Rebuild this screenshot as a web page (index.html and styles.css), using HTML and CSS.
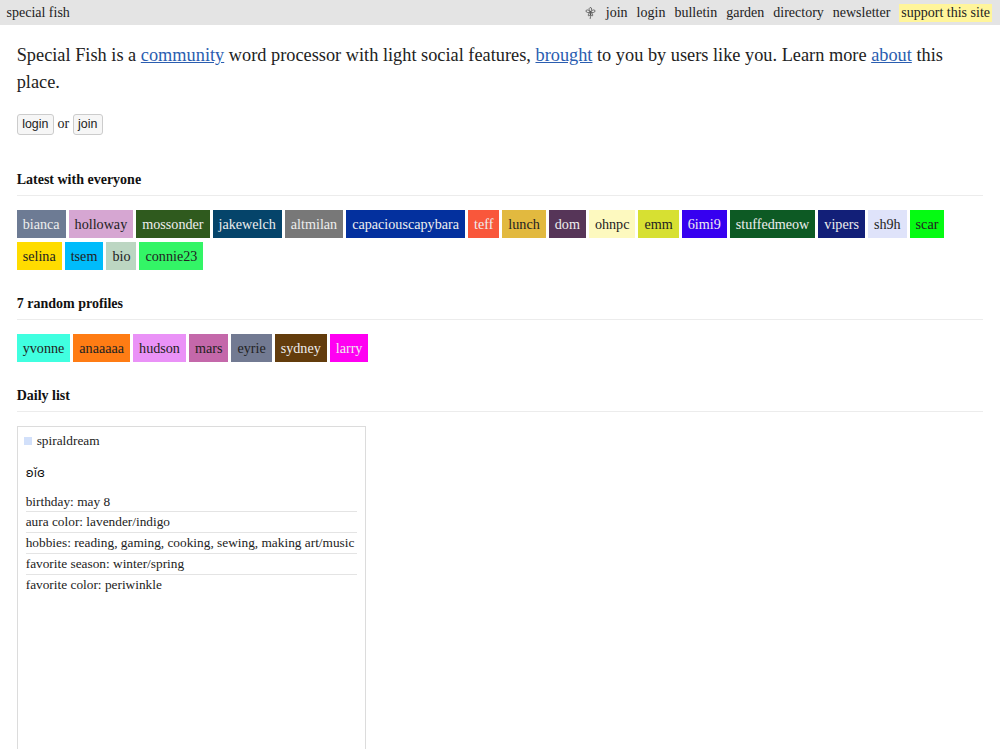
FILE: index.html
```html
<!DOCTYPE html>
<html lang="en">
<head>
<meta charset="utf-8">
<title>special fish</title>
<link rel="stylesheet" href="styles.css">
</head>
<body>
<header class="topbar">
  <a class="brand">special fish</a>
  <nav class="nav">
    <svg class="flower" viewBox="0 0 12 14" width="11" height="14" aria-hidden="true">
      <g fill="none" stroke="#444" stroke-width="0.8">
        <path d="M6 5.500C4.500 4.500 3.800 1.800 5.500 1 7.800 .8 7.800 4 6 5.500Z"/>
        <path d="M5.800 6C4 6.800 1.200 6.800 1 4.800 1.300 2.800 4.400 3.500 5.800 6Z"/>
        <path d="M6.200 6C8 6.800 10.800 6.800 11 4.800 10.700 2.800 7.600 3.500 6.200 6Z"/>
        <path d="M5.800 6.200C4.200 6.800 2.800 9.600 4 10.200 5.800 10.200 6.200 8 5.800 6.200Z"/>
        <path d="M6.200 6.200C7.800 6.800 9.200 9.600 8 10.200 6.600 10.200 5.800 8 6.200 6.200Z"/>
        <path d="M6 8C6.200 10 6.200 11.500 5.600 13.500"/>
      </g>
    </svg>
    <a class="nav-link">join</a>
    <a class="nav-link">login</a>
    <a class="nav-link">bulletin</a>
    <a class="nav-link">garden</a>
    <a class="nav-link">directory</a>
    <a class="nav-link">newsletter</a>
    <a class="nav-link support">support this site</a>
  </nav>
</header>
<main class="main">
  <p class="intro">Special Fish is a <a class="link">community</a> word processor with light social features, <a class="link">brought</a> to you by users like you. Learn more <a class="link">about</a> this place.</p>
  <p class="auth"><button class="btn">login</button> or <button class="btn">join</button></p>

  <h2 class="heading first">Latest with everyone</h2>
  <div class="tags">
    <a class="tag" style="background:#6d7b94;color:#eee">bianca</a>
    <a class="tag" style="background:#d6a6d2;color:#222">holloway</a>
    <a class="tag" style="background:#2f5a1e;color:#eee">mossonder</a>
    <a class="tag" style="background:#05446a;color:#eee">jakewelch</a>
    <a class="tag" style="background:#787878;color:#eee">altmilan</a>
    <a class="tag" style="background:#03309e;color:#eee">capaciouscapybara</a>
    <a class="tag" style="background:#f9573b;color:#eee">teff</a>
    <a class="tag" style="background:#e2b93f;color:#222">lunch</a>
    <a class="tag" style="background:#563558;color:#eee">dom</a>
    <a class="tag" style="background:#fdf9bf;color:#222">ohnpc</a>
    <a class="tag" style="background:#d7e032;color:#222">emm</a>
    <a class="tag" style="background:#3600f0;color:#eee">6imi9</a>
    <a class="tag" style="background:#0d5a24;color:#eee">stuffedmeow</a>
    <a class="tag" style="background:#121f78;color:#eee">vipers</a>
    <a class="tag" style="background:#dfe3fa;color:#222">sh9h</a>
    <a class="tag" style="background:#05fb12;color:#222">scar</a>
    <a class="tag" style="background:#ffdc00;color:#222">selina</a>
    <a class="tag" style="background:#00bcfb;color:#222">tsem</a>
    <a class="tag" style="background:#bcd6c2;color:#222">bio</a>
    <a class="tag" style="background:#33f566;color:#222">connie23</a>
  </div>

  <h2 class="heading">7 random profiles</h2>
  <div class="tags">
    <a class="tag" style="background:#40ffe0;color:#222">yvonne</a>
    <a class="tag" style="background:#ff7c14;color:#222">anaaaaa</a>
    <a class="tag" style="background:#ea92f7;color:#222">hudson</a>
    <a class="tag" style="background:#c468aa;color:#222">mars</a>
    <a class="tag" style="background:#727a92;color:#222">eyrie</a>
    <a class="tag" style="background:#633c0c;color:#eee">sydney</a>
    <a class="tag" style="background:#ff00f2;color:#eee">larry</a>
  </div>

  <h2 class="heading">Daily list</h2>
  <article class="card">
    <div class="card-user"><span class="swatch" style="background:#d2e0fa"></span>spiraldream</div>
    <p class="card-symbol">ʚĭɞ</p>
    <ul class="facts">
      <li>birthday: may 8</li>
      <li>aura color: lavender/indigo</li>
      <li>hobbies: reading, gaming, cooking, sewing, making art/music</li>
      <li>favorite season: winter/spring</li>
      <li>favorite color: periwinkle</li>
    </ul>
  </article>
</main>
</body>
</html>
```
FILE: styles.css
```css
html, body { margin: 0; padding: 0; }
body {
  font-family: "Liberation Serif", "Times New Roman", serif;
  color: #222;
  background: #fff;
  height: 749px;
  overflow: hidden;
}
.topbar {
  display: flex;
  justify-content: space-between;
  align-items: center;
  height: 25px;
  padding: 0 8px 0 6.500px;
  background: #e4e4e4;
  font-size: 14px;
}
.nav { display: flex; align-items: center; gap: 9px; }
.flower { margin-right: 1px; }
.support { background: #fff59b; padding: 1px 2px; }
.main { padding: 17px 17px 0 16.700px; }
.intro { margin: 0; font-size: 18.320px; line-height: 27px; }
.link { color: #2a5db0; text-decoration: underline; }
.auth { margin: 17px 0 0; font-size: 14px; line-height: 22px; }
.btn {
  font-family: "Liberation Sans", Arial, sans-serif;
  font-size: 12.400px;
  height: 21px;
  padding: 0 4.500px;
  background: #f6f6f6;
  color: #222;
  border: 1px solid #ccc;
  border-radius: 3px;
}
.heading {
  margin: 25px 0 14px;
  padding-bottom: 7px;
  border-bottom: 1px solid #ececec;
  font-size: 14px;
  line-height: 17px;
  font-weight: bold;
  color: #111;
}
.heading.first { margin-top: 36px; }
.tags { display: flex; flex-wrap: wrap; gap: 3.500px 3px; }
.tag { padding: 0 6px; font-size: 14.150px; line-height: 28px; }
.card {
  box-sizing: border-box;
  width: 349px;
  height: 340px;
  border: 1px solid #dcdcdc;
  padding: 4px 8px 0;
  font-size: 13.330px;
}
.card-user { display: flex; align-items: center; line-height: 20px; margin-left: -2px; }
.swatch { width: 8px; height: 8px; margin-right: 5px; }
.card-symbol { margin: 13px 0 0; font-family: "DejaVu Sans", sans-serif; font-size: 12px; color: #111; line-height: 18px; }
.facts { list-style: none; margin: 10.200px 0 0; padding: 0; }
.facts li { line-height: 19.700px; border-bottom: 1px solid #e4e4e4; }
.facts li:last-child { border-bottom: none; }
```
